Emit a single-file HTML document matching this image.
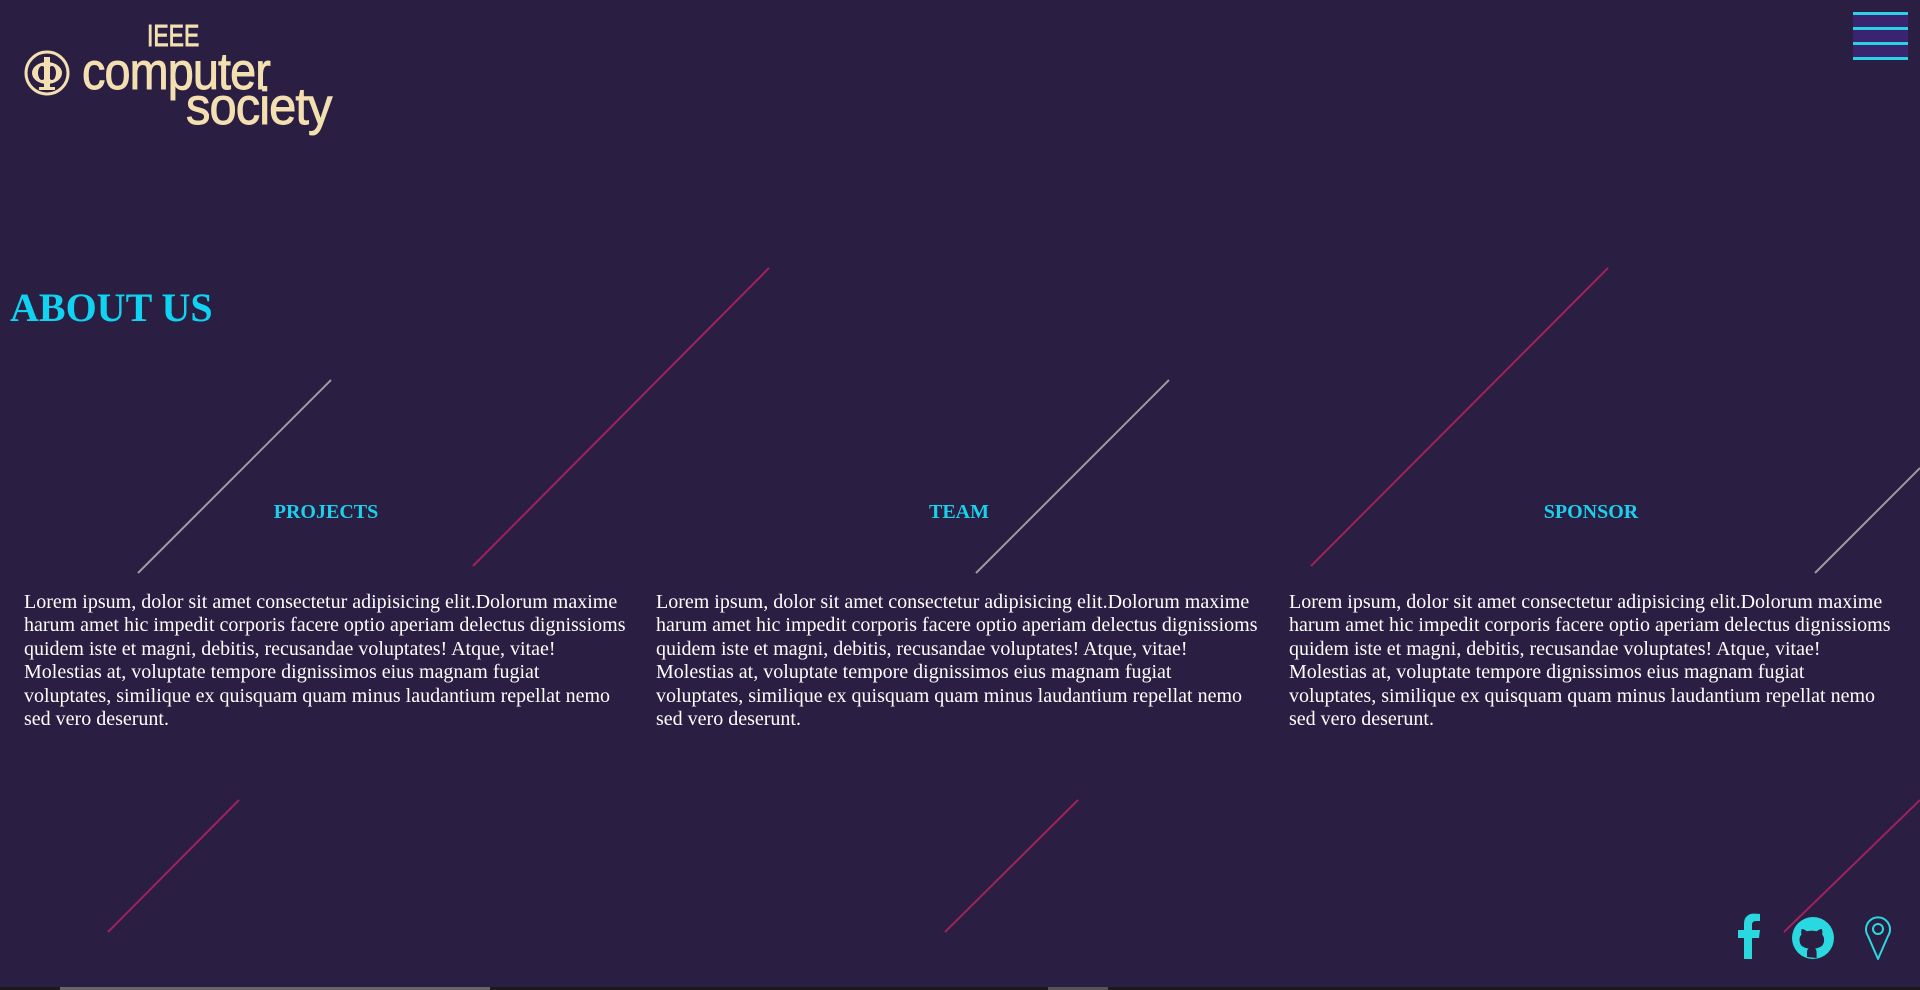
<!DOCTYPE html>
<html><head><meta charset="utf-8"><style>
html,body{margin:0;padding:0}
body{width:1920px;height:990px;background:#2a1e42;position:relative;overflow:hidden;font-family:"Liberation Serif",serif}
.abs{position:absolute}
.h1{left:10px;top:286px;font-size:40px;font-weight:bold;color:#0fd3f0;margin:0;line-height:44px}
.h3{top:501px;width:632px;text-align:center;font-size:20px;font-weight:bold;color:#1ad0ec}
.p{top:591px;width:604px;font-size:20px;line-height:23.4px;color:#fff}
.logo{color:#f3dfb0;font-family:"Liberation Sans",sans-serif;white-space:nowrap;-webkit-text-stroke:0.9px #f3dfb0}
.ham{left:1853px;top:12px;width:55px;height:48px;background:#3a2470}
.ham div{position:absolute;left:0;width:55px;height:3px;background:#2ad0e6}
</style></head><body>
<svg class="abs" style="left:0;top:0" width="1920" height="990">
<g stroke="#a09aa0" stroke-width="2">
<line x1="138" y1="573" x2="331" y2="380"/><line x1="976" y1="573" x2="1169" y2="380"/><line x1="1815" y1="573" x2="1920" y2="468"/></g>
<g stroke="#a0225c" stroke-width="2">
<line x1="473" y1="566" x2="769" y2="268"/><line x1="1311" y1="566" x2="1608" y2="268"/>
<line x1="108" y1="932" x2="239" y2="800"/><line x1="945" y1="932" x2="1078" y2="800"/><line x1="1784" y1="932" x2="1920" y2="800"/></g>
<circle cx="47" cy="73" r="21" fill="none" stroke="#f3dfb0" stroke-width="3"/>
<ellipse cx="47" cy="73" rx="15" ry="11" fill="#f3dfb0"/>
<ellipse cx="42" cy="73" rx="4" ry="7" fill="#2a1e42"/><ellipse cx="52" cy="73" rx="4" ry="7" fill="#2a1e42"/>
<rect x="44" y="57" width="6" height="32" fill="#f3dfb0"/>
<rect x="39" y="87" width="16" height="3" fill="#f3dfb0"/>
<path d="M1752 959 V938 h7 l1-8 h-8 v-5 c0-2.5 1-4 4-4 h4 v-7 c-2-0.3-4-0.4-6-0.4 c-6 0-10 3.5-10 10 v6.4 h-6 v8 h6 v21z" fill="#2ad8e0"/>
<circle cx="1813" cy="938" r="21" fill="#2ad8e0"/>
<path d="M1807 957 v-5 c0-2 1-3 1.5-3.5 c-6-1-9-3-9-9 c0-2 0.7-3.5 2-5 c-0.3-1-0.6-3 0.3-5.5 c2 0 4 1.5 5 2.3 c3-0.8 7-0.8 10 0 c1-0.8 3-2.3 5-2.3 c0.9 2.5 0.6 4.5 0.3 5.5 c1.3 1.5 2 3 2 5 c0 6-3 8-9 9 c0.8 0.8 1.5 2 1.5 4 v5.5z" fill="#2a1e42"/>
<path d="M1878 959 L1868 936 A12 12 0 1 1 1888 936 Z" fill="none" stroke="#2ad8e0" stroke-width="2" stroke-linejoin="round"/>
<circle cx="1878" cy="929" r="5" fill="none" stroke="#2ad8e0" stroke-width="2"/>
<rect x="0" y="987" width="1920" height="3" fill="#1a1a1a"/>
<rect x="60" y="987" width="430" height="3" fill="#666"/>
<rect x="1048" y="987" width="60" height="3" fill="#555"/>
</svg>
<div class="abs logo" style="left:147px;top:20px;font-size:31px;line-height:31px;transform:scaleX(0.74);transform-origin:left">IEEE</div>
<div class="abs logo" style="left:82px;top:46px;font-size:52px;line-height:52px;letter-spacing:-1px;transform:scaleX(0.9);transform-origin:left">computer</div>
<div class="abs logo" style="left:186px;top:81px;font-size:52px;line-height:52px;letter-spacing:-1px;transform:scaleX(0.94);transform-origin:left">society</div>
<div class="ham abs"><div style="top:0"></div><div style="top:15px"></div><div style="top:30px"></div><div style="top:45px"></div></div>
<h1 class="abs h1">ABOUT US</h1>
<div class="abs h3" style="left:10px">PROJECTS</div>
<div class="abs h3" style="left:643px">TEAM</div>
<div class="abs h3" style="left:1275px">SPONSOR</div>
<div class="abs p" style="left:24px">Lorem ipsum, dolor sit amet consectetur adipisicing elit.Dolorum maxime harum amet hic impedit corporis facere optio aperiam delectus dignissioms quidem iste et magni, debitis, recusandae voluptates! Atque, vitae! Molestias at, voluptate tempore dignissimos eius magnam fugiat voluptates, similique ex quisquam quam minus laudantium repellat nemo sed vero deserunt.</div>
<div class="abs p" style="left:656px">Lorem ipsum, dolor sit amet consectetur adipisicing elit.Dolorum maxime harum amet hic impedit corporis facere optio aperiam delectus dignissioms quidem iste et magni, debitis, recusandae voluptates! Atque, vitae! Molestias at, voluptate tempore dignissimos eius magnam fugiat voluptates, similique ex quisquam quam minus laudantium repellat nemo sed vero deserunt.</div>
<div class="abs p" style="left:1289px">Lorem ipsum, dolor sit amet consectetur adipisicing elit.Dolorum maxime harum amet hic impedit corporis facere optio aperiam delectus dignissioms quidem iste et magni, debitis, recusandae voluptates! Atque, vitae! Molestias at, voluptate tempore dignissimos eius magnam fugiat voluptates, similique ex quisquam quam minus laudantium repellat nemo sed vero deserunt.</div>
</body></html>
